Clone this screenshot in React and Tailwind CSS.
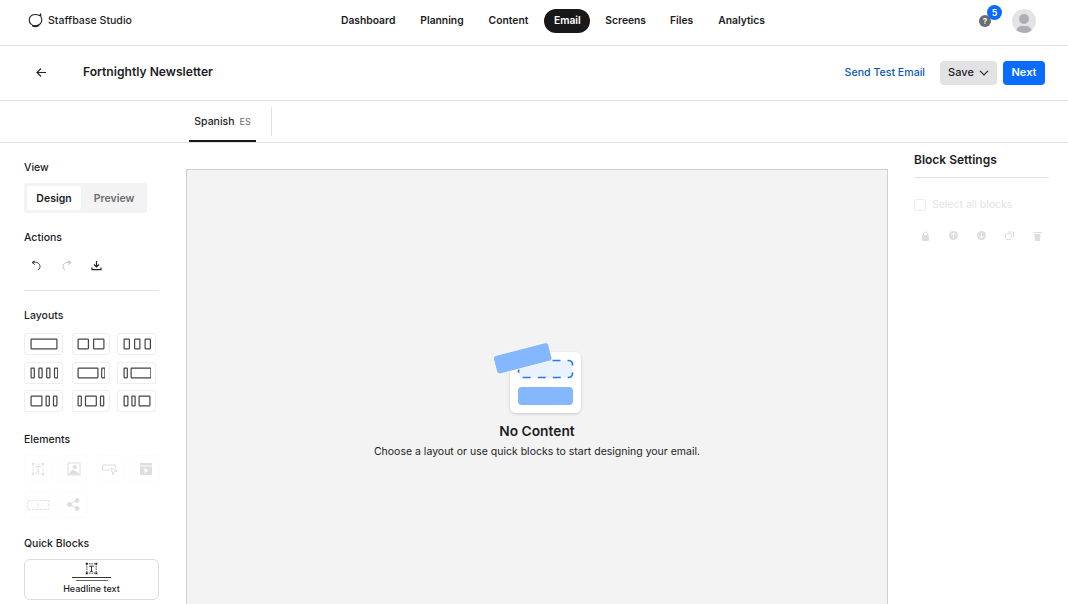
import React from "react";

const font = { fontFamily: "Inter, 'Liberation Sans', sans-serif" };

function Logo() {
  return (
    <svg width="15" height="15" viewBox="0 0 15 15" fill="none" stroke="#222" strokeWidth="1.1">
      <path d="M11.4 2.6 L12.6 1.2 L12.9 4 C14 5.8 14 8.6 12.4 10.6 C10.6 13.2 5.2 13.6 2.9 11 C.8 8.8 .7 5.4 2.5 3.4 C4.8 1 8.9 1 11.4 2.6 Z" />
      <path d="M4.2 12.6 C6 13.6 9.4 13.6 11 12.4" strokeWidth="1.7" />
    </svg>
  );
}

function LayoutIcon({ cols, gap }) {
  let x = 0;
  return (
    <svg width="28" height="12" viewBox="0 0 28 12" fill="none" stroke="#444" strokeWidth="1.2">
      {cols.map((w, i) => {
        const r = <rect key={i} x={x + 1.1} y="1.2" width={w - 1.2} height="9.6" rx="0.5" />;
        x += w + gap;
        return r;
      })}
    </svg>
  );
}

const layouts = [
  { cols: [27], gap: 0 },
  { cols: [11.5, 11.5], gap: 4 },
  { cols: [6.5, 6.5, 6.5], gap: 4 },
  { cols: [4.4, 4.4, 4.4, 4.4], gap: 3.4 },
  { cols: [21, 4.4], gap: 2.6 },
  { cols: [4.4, 21], gap: 2.6 },
  { cols: [12, 4.4, 4.6], gap: 3 },
  { cols: [4.4, 12, 4.4], gap: 3 },
  { cols: [5, 4.4, 12], gap: 2.8 },
];

function ElementBox({ children }) {
  return (
    <div className="w-[27px] h-[27px] flex items-center justify-center rounded-[3px] border border-[#fbfbfb]">
      {children}
    </div>
  );
}

function TextFrameIcon({ color = "#dedede", size = 14 }) {
  return (
    <svg width={size} height={size} viewBox="0 0 14 14" fill="none" stroke={color} strokeWidth="1">
      <path d="M2 2 H12 M2 12 H12 M2 2 V12 M12 2 V12" strokeDasharray="1.5 1" />
      <path d="M4.5 4.5 H9.5 M7 4.5 V10 M5.5 10 H8.5" />
      <rect x="0.8" y="0.8" width="2" height="2" fill={color} stroke="none" />
      <rect x="11.2" y="0.8" width="2" height="2" fill={color} stroke="none" />
      <rect x="0.8" y="11.2" width="2" height="2" fill={color} stroke="none" />
      <rect x="11.2" y="11.2" width="2" height="2" fill={color} stroke="none" />
    </svg>
  );
}

function NoContentArt() {
  return (
    <svg width="96" height="76" viewBox="0 0 96 76" fill="none">
      <defs>
        <filter id="s" x="-20%" y="-20%" width="140%" height="140%">
          <feDropShadow dx="0" dy="1" stdDeviation="1.5" floodColor="#000" floodOpacity="0.18" />
        </filter>
      </defs>
      <rect x="20" y="12" width="71" height="61" rx="6" fill="#fff" filter="url(#s)" />
      <rect x="28.5" y="20.5" width="54" height="17" rx="4" fill="#eaf2ff" stroke="#1f78ff" strokeWidth="1.7" strokeDasharray="8 7" />
      <rect x="28" y="47" width="55" height="18" rx="4" fill="#85b7ff" />
      <rect x="4.2" y="8.8" width="57" height="19" rx="3" transform="rotate(-14.5 32.7 18.3)" fill="#85b7ff" stroke="#fff" strokeWidth="0.8" />
    </svg>
  );
}

export default function App() {
  return (
    <div className="w-[1068px] h-[604px] overflow-hidden bg-white flex flex-col text-[#1d1d1f]" style={font}>
      <header className="h-[46px] shrink-0 border-b border-[#e0e0e0] flex items-center relative px-7">
        <div className="flex items-center gap-[5px] w-[200px] mb-[3px]">
          <Logo />
          <span className="text-[10.6px] font-medium">Staffbase Studio</span>
        </div>
        <nav className="absolute left-[341px] top-[9px] flex items-center h-[24px] text-[10.3px] font-semibold">
          <span className="pb-[1px] mr-[25px]">Dashboard</span>
          <span className="pb-[1px] mr-[25px]">Planning</span>
          <span className="pb-[1px] mr-[16px]">Content</span>
          <span className="h-[24px] w-[46px] pb-[1px] mr-[15px] flex items-center justify-center rounded-full bg-[#18181a] text-white">Email</span>
          <span className="pb-[1px] mr-[24px]">Screens</span>
          <span className="pb-[1px] mr-[25px]">Files</span>
          <span className="pb-[1px]">Analytics</span>
        </nav>
        <div className="ml-auto flex items-center mr-[4px] mb-[3px]">
          <div className="relative w-[12px] h-[12px] rounded-full bg-[#6b6b70] text-white text-[8px] font-bold flex items-center justify-center">
            ?
            <span className="absolute -top-[10px] left-[8px] w-[15px] h-[15px] rounded-full bg-[#0a6cff] text-white text-[9px] font-semibold flex items-center justify-center">5</span>
          </div>
          <div className="ml-[21px] w-[24px] h-[24px] rounded-full bg-[#e3e3e5] overflow-hidden relative">
            <span className="absolute left-[7px] top-[5px] w-[10px] h-[10px] rounded-full bg-[#aeaeb2]" />
            <span className="absolute left-[4px] top-[17px] w-[16px] h-[12px] rounded-full bg-[#aeaeb2]" />
          </div>
        </div>
      </header>

      <div className="h-[55px] shrink-0 border-b border-[#e0e0e0] flex items-center pl-[36px] pr-[23px]">
        <svg width="11" height="11" viewBox="0 0 11 11" fill="none" stroke="#222" strokeWidth="1.1" className="mb-[1px]">
          <path d="M10 5.5 H1 M5 1.5 L1 5.5 L5 9.5" />
        </svg>
        <span className="ml-[36px] text-[12.1px] font-semibold pb-[1px]">Fortnightly Newsletter</span>
        <span className="ml-auto text-[10.6px] font-medium text-[#0b57b8] pb-[1px]">Send Test Email</span>
        <button className="ml-[15px] w-[57px] h-[24px] pb-[1px] rounded-[4px] bg-[#e2e2e4] text-[11px] font-medium flex items-center justify-center gap-[5px]">
          Save
          <svg width="10" height="6" viewBox="0 0 10 6" fill="none" stroke="#222" strokeWidth="1.2"><path d="M1 .8 L5 4.8 L9 .8" /></svg>
        </button>
        <button className="ml-[6px] w-[42px] h-[24px] pb-[1px] rounded-[4px] bg-[#0a6cff] text-white text-[11px] font-semibold">Next</button>
      </div>

      <div className="h-[42px] shrink-0 border-b border-[#e0e0e0] flex pl-[189px]">
        <div className="w-[67px] h-[41px] border-b-2 border-[#18181a] flex items-center justify-center gap-[5px] pt-[3px]">
          <span className="text-[10.5px] font-medium">Spanish</span>
          <span className="text-[9px] text-[#6b6b70]">ES</span>
        </div>
        <div className="ml-[15px] mt-[6px] w-px h-[29px] bg-[#e0e0e0]" />
      </div>

      <div className="flex-1 flex min-h-0">
        <aside className="w-[186px] shrink-0 pl-[24px] pt-[18px]">
          <div className="text-[10.5px] font-medium leading-[13px]">View</div>
          <div className="mt-[9px] w-[123px] h-[30px] rounded-[3px] bg-[#f3f3f3] p-[3px] flex text-[10.5px] font-semibold">
            <div className="w-[54px] rounded-[3px] bg-white flex items-center justify-center pt-[1px]">Design</div>
            <div className="flex-1 flex items-center justify-center text-[#6b6b70] pl-[3px] pt-[1px]">Preview</div>
          </div>
          <div className="mt-[18px] text-[10.5px] font-medium leading-[13px]">Actions</div>
          <div className="mt-[15px] w-[135px] h-[12px] flex items-center pl-[7px] gap-[19px]">
            <svg width="11" height="11" viewBox="0 0 11 11" fill="none" stroke="#333" strokeWidth="1">
              <path d="M1.5 2.5 C5 1.5 9 3 9 6.5 C9 8 8 9.5 7 10" /><path d="M1 2.5 L4 .8 M1 2.5 L3.8 4.6" />
            </svg>
            <svg width="11" height="11" viewBox="0 0 11 11" fill="none" stroke="#bbb" strokeWidth="1">
              <path d="M9.5 2.5 C6 1.5 2 3 2 6.5 C2 8 3 9.5 4 10" /><path d="M10 2.5 L7 .8 M10 2.5 L7.2 4.6" />
            </svg>
            <svg width="11" height="11" viewBox="0 0 11 11" fill="none" stroke="#222" strokeWidth="1.2">
              <path d="M5.5 1 V6.5 M3 4.5 L5.5 7 L8 4.5" /><path d="M1 7.5 V9.7 H10 V7.5" />
            </svg>
          </div>
          <div className="mt-[19px] w-[135px] h-px bg-[#e0e0e0]" />
          <div className="mt-[18px] text-[10.5px] font-medium leading-[13px]">Layouts</div>
          <div className="mt-[11px] grid grid-cols-[39px_38px_39px] gap-y-[6.5px] w-[135px]">
            {layouts.map((l, i) => (
              <div key={i} className={"h-[22px] rounded-[3px] border border-[#eeeeee] flex items-center justify-center " + (i % 3 === 1 ? "ml-[9px] w-[38px] " : i % 3 === 2 ? "ml-[16px] w-[39px] " : "w-[39px] ")}>
                <LayoutIcon cols={l.cols} gap={l.gap} />
              </div>
            ))}
          </div>
          <div className="mt-[21px] text-[10.5px] font-medium leading-[13px]">Elements</div>
          <div className="mt-[9px] grid grid-cols-[27px_27px_27px_27px] gap-[9px] w-[135px]">
            <ElementBox><TextFrameIcon /></ElementBox>
            <ElementBox>
              <svg width="14" height="14" viewBox="0 0 14 14" fill="none" stroke="#dedede"><rect x="1" y="1" width="12" height="12" /><circle cx="8" cy="5" r="1.5" fill="#dedede" /><path d="M2 12 L6 8 L9 10 L12 12 Z" fill="#dedede" /></svg>
            </ElementBox>
            <ElementBox>
              <svg width="17" height="14" viewBox="0 0 17 14" fill="none" stroke="#dedede"><path d="M9 8 H1.5 V3 H14.5 V6" /><path d="M10 6 L16 9 L13 10 L12 13 Z" /></svg>
            </ElementBox>
            <ElementBox>
              <svg width="14" height="14" viewBox="0 0 14 14" fill="#dedede"><rect x="1" y="1" width="12" height="2.5" /><path fillRule="evenodd" d="M1 4.5 H13 V13 H1 Z M5.5 6 V11 L9.5 8.5 Z" /></svg>
            </ElementBox>
            <ElementBox>
              <svg width="22" height="12" viewBox="0 0 22 12" fill="none" stroke="#e2e2e2"><rect x="0.5" y="1.5" width="21" height="9" strokeDasharray="2.5 1.5" /><path d="M11 4 V8" /></svg>
            </ElementBox>
            <ElementBox>
              <svg width="13" height="13" viewBox="0 0 13 13" fill="#dedede" stroke="#dedede"><circle cx="2.5" cy="6.5" r="2" /><circle cx="10" cy="2.5" r="2" /><circle cx="10" cy="10.5" r="2" /><path d="M2.5 6.5 L10 2.5 M2.5 6.5 L10 10.5" /></svg>
            </ElementBox>
          </div>
          <div className="mt-[19px] text-[10.5px] font-medium leading-[13px]">Quick Blocks</div>
          <div className="mt-[9px] w-[135px] h-[41px] rounded-[6px] border border-[#dcdcdc] flex flex-col items-center pt-[2px]">
            <TextFrameIcon color="#222" size="13" />
            <div className="mt-[2px] w-[39px] h-px bg-[#333]" />
            <div className="mt-[2px] w-[32px] h-px bg-[#666]" />
            <span className="mt-[2px] text-[9px] font-medium leading-[12px]">Headline text</span>
          </div>
        </aside>

        <main className="w-[702px] shrink-0 mt-[26px] h-[600px] bg-[#f3f3f3] border border-[#cfcfcf] flex flex-col items-center pt-[170px]">
          <div className="ml-[2px] h-[76px]"><NoContentArt /></div>
          <div className="mt-[7px] text-[13.75px] font-semibold leading-[16px]">No Content</div>
          <div className="mt-[6px] text-[10.5px] leading-[14px]">Choose a layout or use quick blocks to start designing your email.</div>
        </main>

        <aside className="ml-[26px] w-[135px] pt-[10px]">
          <div className="text-[12px] font-semibold leading-[15px] -mt-[1px]">Block Settings</div>
          <div className="mt-[10px] h-px bg-[#e0e0e0]" />
          <div className="mt-[19px] flex items-center gap-[6px]">
            <span className="w-[12px] h-[12px] rounded-[3px] border border-[#ececec]" />
            <span className="text-[10.5px] text-[#e4e4e4]">Select all blocks</span>
          </div>
          <div className="mt-[18px] pl-[7px] flex items-center gap-[19px]">
            <svg width="9" height="10" viewBox="0 0 9 10" fill="#dedede"><rect x="1" y="4" width="7" height="6" rx="1" /><path d="M2.5 4 V3 A2 2 0 0 1 6.5 3 V4" fill="none" stroke="#dedede" /></svg>
            <svg width="9" height="9" viewBox="0 0 9 9"><circle cx="4.5" cy="4.5" r="4.5" fill="#dedede" /><path d="M4.5 7.2 V2 M2 4.4 L4.5 1.9 L7 4.4" stroke="#fff" fill="none" /></svg>
            <svg width="9" height="9" viewBox="0 0 9 9"><circle cx="4.5" cy="4.5" r="4.5" fill="#dedede" /><path d="M4.5 1.8 V7 M2 4.6 L4.5 7.1 L7 4.6" stroke="#fff" fill="none" /></svg>
            <svg width="9" height="9" viewBox="0 0 9 9" fill="none" stroke="#dedede"><rect x="0.5" y="2.5" width="5.5" height="6" rx="1" /><path d="M3 1 H8.5 V6.5" /></svg>
            <svg width="9" height="10" viewBox="0 0 9 10" fill="#dedede"><rect x="0.5" y="1" width="8" height="1.2" /><path d="M1.5 3 H7.5 L7 10 H2 Z" /></svg>
          </div>
        </aside>
      </div>
    </div>
  );
}
